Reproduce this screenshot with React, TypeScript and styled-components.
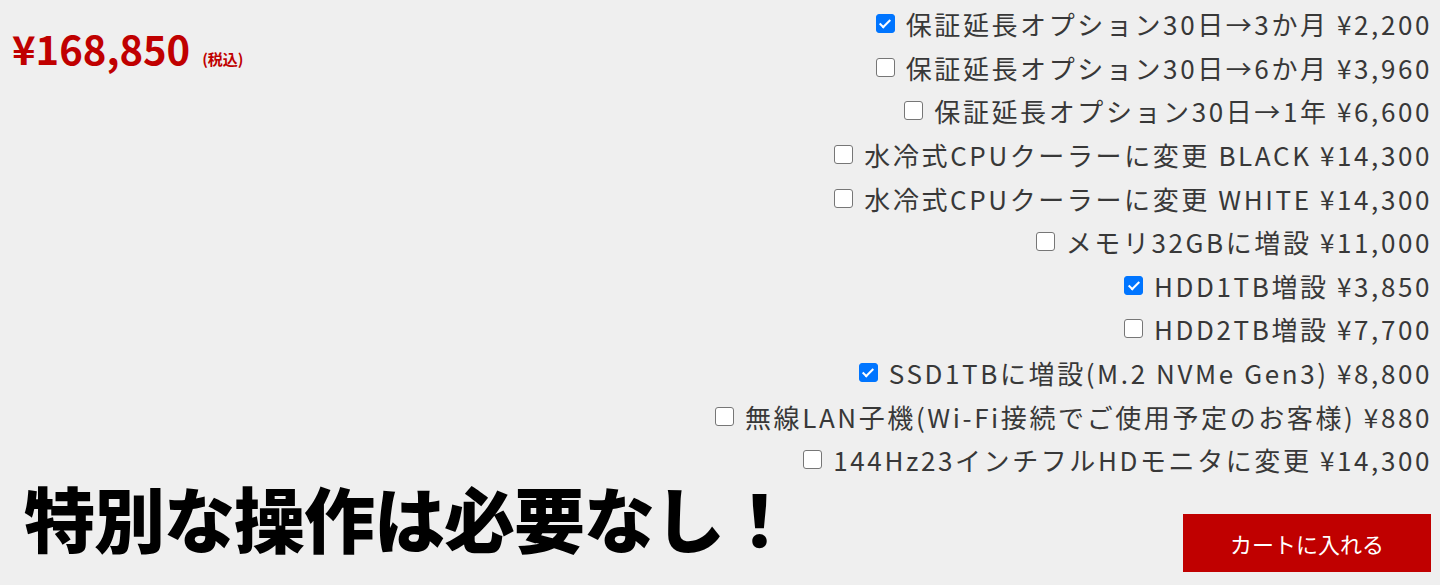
import React from "react";
import styled, { createGlobalStyle } from "styled-components";

const Global = createGlobalStyle`
  html, body { margin: 0; padding: 0; background: #efefef; }
  body { font-family: "Noto Sans CJK JP", "Noto Sans", sans-serif; }
`;

const Page = styled.div`
  width: 1440px;
  height: 585px;
  box-sizing: border-box;
  display: grid;
  grid-template-columns: minmax(0, 1fr) auto;
  background: #efefef;
  overflow: hidden;
`;

const LeftCol = styled.div`
  display: flex;
  flex-direction: column;
  justify-content: space-between;
  padding: 24px 0 33px 12px;
  min-width: 0;
`;

const Price = styled.div`
  display: flex;
  align-items: baseline;
  gap: 12px;
  color: #c00000;
  font-family: "Noto Sans CJK JP", sans-serif;
`;

const Amount = styled.span`
  font-size: 40px;
  font-weight: 700;
  line-height: 1.2;
`;

const Tax = styled.span`
  font-size: 15px;
  font-weight: 700;
`;

const Headline = styled.div`
  font-family: "Noto Sans CJK JP", sans-serif;
  font-size: 71px;
  font-weight: 900;
  line-height: 1;
  letter-spacing: -1px;
  white-space: nowrap;
  color: #000;
  padding-left: 12px;
`;

const RightCol = styled.div`
  display: flex;
  flex-direction: column;
  align-items: flex-end;
  padding: 2px 9px 0 0;
`;

const OptionList = styled.div`
  display: flex;
  flex-direction: column;
  align-items: flex-end;
  margin-right: -1px;
`;

const Row = styled.label`
  display: flex;
  align-items: center;
  justify-content: flex-end;
  gap: 11px;
  height: 43.6px;
  font-size: 26px;
  letter-spacing: 2.6px;
  color: #383838;
  white-space: nowrap;
`;

const Check = styled.input.attrs({ type: "checkbox" })`
  appearance: none;
  -webkit-appearance: none;
  box-sizing: border-box;
  width: 19px;
  height: 19px;
  margin: 0;
  flex: none;
  border: 1.5px solid #767676;
  border-radius: 3px;
  background: #fff;
  display: grid;
  place-items: center;
  &:checked {
    background: #0075ff;
    border-color: #0075ff;
  }
  &:checked::after {
    content: "";
    width: 4px;
    height: 9px;
    border: solid #fff;
    border-width: 0 2.5px 2.5px 0;
    transform: translateY(-1px) rotate(45deg);
  }
`;

const CartButton = styled.button`
  margin-top: 32px;
  width: 248px;
  height: 58px;
  background: #c00000;
  color: #fff;
  border: none;
  font-family: "Noto Sans CJK JP", sans-serif;
  font-size: 22px;
  cursor: pointer;
`;

const options: { label: string; checked: boolean }[] = [
  { label: "保証延長オプション30日→3か月 ¥2,200", checked: true },
  { label: "保証延長オプション30日→6か月 ¥3,960", checked: false },
  { label: "保証延長オプション30日→1年 ¥6,600", checked: false },
  { label: "水冷式CPUクーラーに変更 BLACK ¥14,300", checked: false },
  { label: "水冷式CPUクーラーに変更 WHITE ¥14,300", checked: false },
  { label: "メモリ32GBに増設 ¥11,000", checked: false },
  { label: "HDD1TB増設 ¥3,850", checked: true },
  { label: "HDD2TB増設 ¥7,700", checked: false },
  { label: "SSD1TBに増設(M.2 NVMe Gen3) ¥8,800", checked: true },
  { label: "無線LAN子機(Wi-Fi接続でご使用予定のお客様) ¥880", checked: false },
  { label: "144Hz23インチフルHDモニタに変更 ¥14,300", checked: false },
];

export default function App() {
  return (
    <>
      <Global />
      <Page>
        <LeftCol>
          <Price>
            <Amount>¥168,850</Amount>
            <Tax>(税込)</Tax>
          </Price>
          <Headline>特別な操作は必要なし！</Headline>
        </LeftCol>
        <RightCol>
          <OptionList>
            {options.map((o) => (
              <Row key={o.label}>
                <Check defaultChecked={o.checked} />
                <span>{o.label}</span>
              </Row>
            ))}
          </OptionList>
          <CartButton>カートに入れる</CartButton>
        </RightCol>
      </Page>
    </>
  );
}
